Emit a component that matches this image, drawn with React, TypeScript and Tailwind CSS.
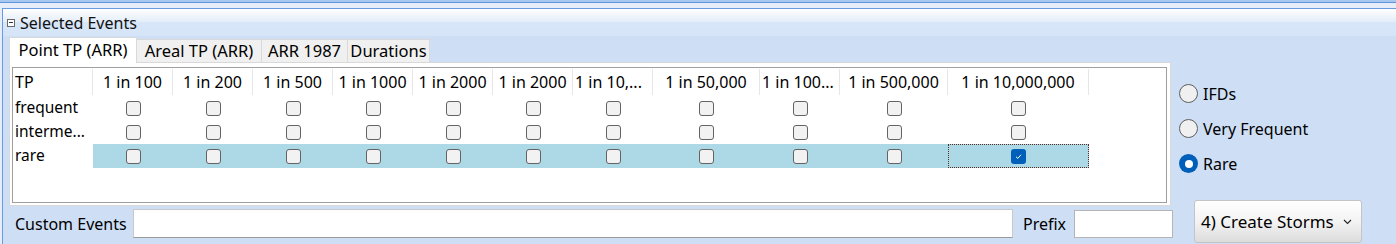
import React from "react";

const GRID =
  "grid grid-cols-[80px_80px_80px_80px_80px_80px_80px_80px_107px_80px_108px_141px]";

const headers: { label: string; align: "center" | "left" }[] = [
  { label: "1 in 100", align: "center" },
  { label: "1 in 200", align: "center" },
  { label: "1 in 500", align: "center" },
  { label: "1 in 1000", align: "center" },
  { label: "1 in 2000", align: "center" },
  { label: "1 in 2000", align: "center" },
  { label: "1 in 10,...", align: "left" },
  { label: "1 in 50,000", align: "center" },
  { label: "1 in 100...", align: "left" },
  { label: "1 in 500,000", align: "center" },
  { label: "1 in 10,000,000", align: "center" },
];

function Box({ checked }: { checked?: boolean }) {
  if (checked) {
    return (
      <span className="w-[15px] h-[15px] rounded-[3px] bg-[#005fb8] flex items-center justify-center">
        <svg width="9" height="9" viewBox="0 0 9 9">
          <path d="M2 4.8 L3.8 6.4 L7 2.8" fill="none" stroke="#ffffff" strokeWidth="1" />
        </svg>
      </span>
    );
  }
  return <span className="w-[15px] h-[15px] rounded-[3px] border border-[#636363] bg-[#f2f2f2]" />;
}

function Row({ label, rare }: { label: string; rare?: boolean }) {
  return (
    <div className={`${GRID} h-[24px]`}>
      <div className="pl-[2px] flex items-center text-[15.5px]">{label}</div>
      {headers.map((h, i) => {
        const focus = rare && i === headers.length - 1;
        return (
          <div
            key={i}
            className={`flex items-center justify-center ${rare ? "bg-[#add8e6]" : ""} ${
              focus ? "border border-dotted border-[#5a2b20]" : ""
            }`}
          >
            <Box checked={focus} />
          </div>
        );
      })}
    </div>
  );
}

function Radio({ label, checked }: { label: string; checked?: boolean }) {
  return (
    <div className="h-[35px] flex items-center gap-[5px]">
      {checked ? (
        <span className="w-[19px] h-[19px] rounded-full bg-[#005fb8] flex items-center justify-center">
          <span className="w-[8px] h-[8px] rounded-full bg-white" />
        </span>
      ) : (
        <span className="w-[19px] h-[19px] rounded-full border border-[#5e5e5e] bg-[#f0f0f0]" />
      )}
      <span className="text-[16px]">{label}</span>
    </div>
  );
}

export default function App() {
  return (
    <div className="w-[1396px] h-[244px] overflow-hidden bg-[#e4edf9] font-['Noto_Sans',sans-serif] text-[16px] text-black leading-none">
      <div className="h-[2px] bg-[#a9c8f0]" />
      <div className="h-px bg-[#5f95dc]" />
      <div className="h-[5px] bg-[#e6eefa]" />
      <div className="ml-[2px] h-[236px] border-l border-t border-[#6a9be0] bg-[#cedff5] flex flex-col">
        {/* header */}
        <div className="h-[27px] flex items-center pl-[4px] bg-[linear-gradient(to_bottom,#ffffff,#e3edf9_48%,#d7e6f8_50%,#d5e4f7)]">
          <span className="w-[8px] h-[8px] border border-[#6b6b6b] bg-white flex items-center justify-center mr-[5px]">
            <span className="w-[4px] h-px bg-[#333]" />
          </span>
          <span className="text-[16px] text-[#111]">Selected Events</span>
        </div>
        <div className="flex">
          {/* left column */}
          <div className="pl-[6px] w-[1176px] shrink-0">
            {/* tabs */}
            <div className="flex items-end h-[26px] text-[16.5px]">
              <div className="w-[128px] h-[26px] bg-white border border-b-0 border-[#d9d9d9] flex items-center justify-center relative z-10 -mb-px pb-px">
                Point TP (ARR)
              </div>
              <div className="w-[125px] h-[23px] bg-[#f0f0f0] border border-l-0 border-b-0 border-[#d9d9d9] flex items-center justify-center">
                Areal TP (ARR)
              </div>
              <div className="w-[86px] h-[23px] bg-[#f0f0f0] border border-l-0 border-b-0 border-[#d9d9d9] flex items-center justify-center">
                ARR 1987
              </div>
              <div className="w-[82px] h-[23px] bg-[#f0f0f0] border border-l-0 border-b-0 border-[#d9d9d9] flex items-center justify-center">
                Durations
              </div>
            </div>
            {/* page */}
            <div className="w-[1162px] h-[144px] bg-white border border-[#d9d9d9] pt-[4px] pl-[2px]">
              <div className="w-[1155px] h-[136px] border border-[#9f9f9f] bg-white">
                <div className={`${GRID} h-[28px]`}>
                  <div className="pl-[2px] flex items-center border-r border-[#e6e6e6] my-px">TP</div>
                  {headers.map((h, i) => (
                    <div
                      key={i}
                      className={`flex items-center border-r border-[#e6e6e6] my-px overflow-hidden whitespace-nowrap ${
                        h.align === "center" ? "justify-center" : "pl-[2px]"
                      }`}
                    >
                      {h.label}
                    </div>
                  ))}
                </div>
                <Row label="frequent" />
                <Row label="interme..." />
                <Row label="rare" rare />
              </div>
            </div>
            {/* bottom row */}
            <div className="flex items-center mt-[3px] h-[29px]">
              <span className="w-[124px] pl-[6px] text-[16px]">Custom Events</span>
              <div className="w-[880px] h-[29px] bg-white border border-[#c9c9c9] border-b-[#9a9a9a]" />
              <span className="w-[61px] pl-[10px] text-[16px]">Prefix</span>
              <div className="w-[99px] h-[28px] bg-white border border-[#b5b5b5]" />
            </div>
          </div>
          {/* right column */}
          <div className="flex flex-col">
            <div className="pt-[40px]">
              <Radio label="IFDs" />
              <Radio label="Very Frequent" />
              <Radio label="Rare" checked />
            </div>
            <button className="ml-[15px] mt-[19px] w-[168px] h-[43px] rounded-[3px] border border-[#c4c4c4] bg-[linear-gradient(to_bottom,#ffffff,#f3f3f3_50%,#dcdcdc)] flex items-center pl-[6px] pr-[9px] justify-between text-[17px] text-black">
              <span>4) Create Storms</span>
              <svg width="9" height="6" viewBox="0 0 9 6">
                <path d="M1 1 L4.5 4.5 L8 1" fill="none" stroke="#222" strokeWidth="1.1" />
              </svg>
            </button>
          </div>
        </div>
      </div>
    </div>
  );
}
